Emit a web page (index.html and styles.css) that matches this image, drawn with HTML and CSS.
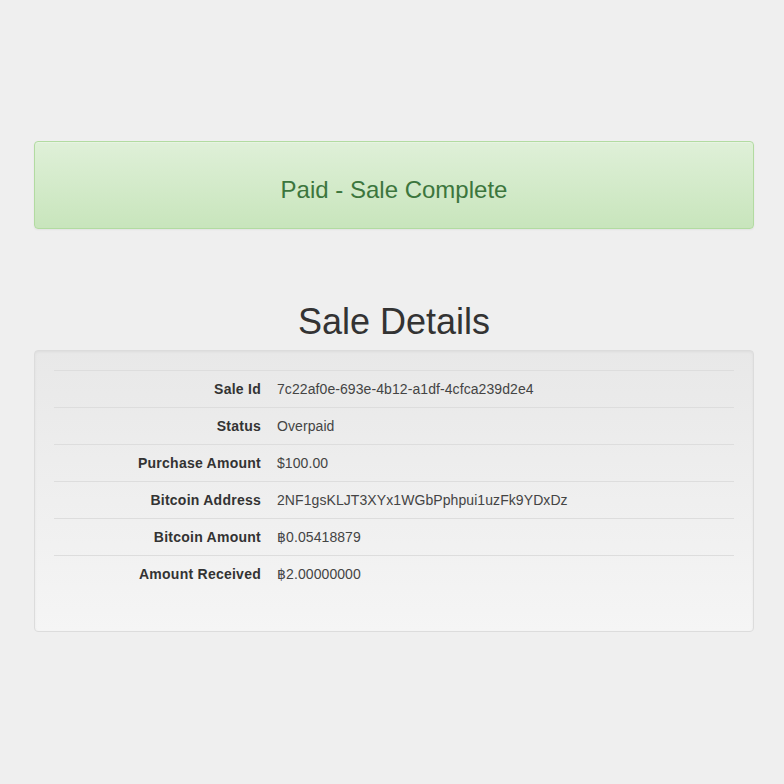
FILE: index.html
```html
<!DOCTYPE html>
<html lang="en">
<head>
  <meta charset="UTF-8" />
  <meta name="viewport" content="width=device-width, initial-scale=1" />
  <title>Sale Details</title>
  <link rel="stylesheet" href="styles.css">
</head>
<body>
  <div class="container">
    <div class="alert alert-success">
      <h3>Paid - Sale Complete</h3>
    </div>

    <h1>Sale Details</h1>

    <div class="well">
      <table class="details">
        <tr>
          <th>Sale Id</th>
          <td>7c22af0e-693e-4b12-a1df-4cfca239d2e4</td>
        </tr>
        <tr>
          <th>Status</th>
          <td>Overpaid</td>
        </tr>
        <tr>
          <th>Purchase Amount</th>
          <td>$100.00</td>
        </tr>
        <tr>
          <th>Bitcoin Address</th>
          <td>2NF1gsKLJT3XYx1WGbPphpui1uzFk9YDxDz</td>
        </tr>
        <tr>
          <th>Bitcoin Amount</th>
          <td>฿0.05418879</td>
        </tr>
        <tr>
          <th>Amount Received</th>
          <td>฿2.00000000</td>
        </tr>
      </table>
    </div>
  </div>
</body>
</html>
```

FILE: styles.css
```css
body {
  margin: 0;
  font-family: 'Liberation Sans', Arial, Helvetica, sans-serif;
  font-size: 14px;
  line-height: 1.42857;
  color: #333;
  background: #efefef;
}

.container {
  width: 720px;
  margin-left: 34px;
  padding-top: 141px;
}

.alert {
  padding: 15px;
  border: 1px solid #b2dba1;
  border-radius: 4px;
  text-align: center;
}

.alert-success {
  color: #3c763d;
  background: linear-gradient(to bottom, #dff0d8 0, #c8e5bc 100%);
  box-shadow: inset 0 1px 0 rgba(255, 255, 255, 0.25), 0 1px 2px rgba(0, 0, 0, 0.05);
}

.alert h3 {
  margin: 20px 0 10px;
  font-size: 24px;
  font-weight: 500;
  line-height: 1.1;
}

h1 {
  margin: 73px 0 8px;
  font-size: 36px;
  font-weight: 500;
  line-height: 1.1;
  text-align: center;
}

.well {
  padding: 19px;
  border: 1px solid #dcdcdc;
  border-radius: 4px;
  background: linear-gradient(to bottom, #e8e8e8 0, #f5f5f5 100%);
  box-shadow: inset 0 1px 3px rgba(0, 0, 0, 0.05), 0 1px 0 rgba(255, 255, 255, 0.1);
}

.details {
  width: 100%;
  margin-bottom: 20px;
  border-collapse: collapse;
}

.details th,
.details td {
  padding: 9px 8px 7px;
  border-top: 1px solid #ddd;
  vertical-align: top;
}

.details th {
  width: 199px;
  text-align: right;
  font-weight: bold;
  letter-spacing: 0.25px;
}

.details td {
  text-align: left;
  color: #444;
  letter-spacing: 0.08px;
}
```
